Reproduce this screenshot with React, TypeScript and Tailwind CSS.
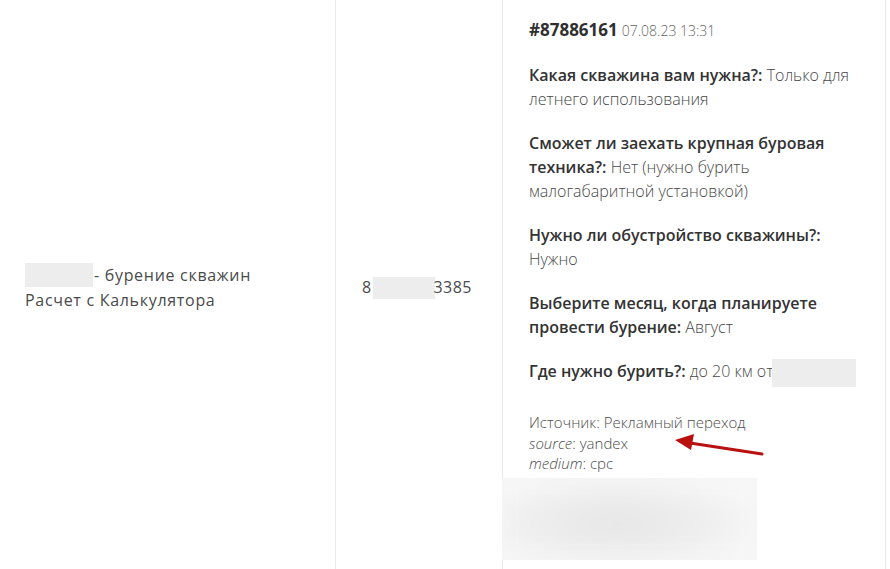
import React from "react";

const FONT = { fontFamily: '"Open Sans", "Noto Sans", sans-serif' };

const L = ({ children }: { children: React.ReactNode }) => (
  <b className="font-semibold text-[#333]">{children}</b>
);

const ANSWERS: React.ReactNode[][] = [
  [<><L>Какая скважина вам нужна?:</L> Только для</>, <>летнего использования</>],
  [
    <L>Сможет ли заехать крупная буровая</L>,
    <><L>техника?:</L> Нет (нужно бурить</>,
    <>малогабаритной установкой)</>,
  ],
  [<L>Нужно ли обустройство скважины?:</L>, <>Нужно</>],
  [<L>Выберите месяц, когда планируете</L>, <><L>провести бурение:</L> Август</>],
  [
    <>
      <L>Где нужно бурить?:</L> до 20 км от
      <span className="inline-block w-[84px] h-[28px] align-middle -ml-[1px] bg-[#ededed]" />
    </>,
  ],
];

export default function App() {
  return (
    <div className="relative w-[890px] h-[569px] overflow-hidden bg-white" style={FONT}>
      <div className="flex h-full">
        {/* name column */}
        <div className="w-[336px] shrink-0 border-r border-[#ebebeb] flex items-center pl-[25px] pt-[6px]">
          <div className="text-[16px] leading-[25px] text-[#4a4a4a] tracking-[0.7px]">
            <div className="flex items-center">
              <span className="inline-block w-[68px] h-[24px] bg-[#ededed]" />
              <span className="ml-[1px]">- бурение скважин</span>
            </div>
            <div>Расчет с Калькулятора</div>
          </div>
        </div>

        {/* phone column */}
        <div className="w-[167px] shrink-0 border-r border-[#ebebeb] flex items-center pl-[26px] pt-[6px]">
          <div className="flex items-center text-[16px] leading-[25px] text-[#4a4a4a] tracking-[0.4px]">
            <span>8</span>
            <span className="inline-block w-[62px] h-[22px] bg-[#ededed] ml-[1px]" />
            <span className="-ml-[1px]">3385</span>
          </div>
        </div>

        {/* details column */}
        <div className="relative w-[383px] shrink-0 border-r border-[#ebebeb] pl-[26px] pt-[18px]">
          <div className="flex items-baseline gap-[4px] leading-[24px]">
            <span className="text-[17px] font-bold text-[#2f2f2f]">#87886161</span>
            <span className="text-[14px] font-light text-[#666]">07.08.23 13:31</span>
          </div>

          <div className="mt-[20px] flex flex-col gap-[20px]">
            {ANSWERS.map((lines, i) => (
              <div key={i} className="text-[16px] leading-[24px] text-[#484848] font-light">
                {lines.map((l, j) => (
                  <div key={j} className="whitespace-nowrap">
                    {l}
                  </div>
                ))}
              </div>
            ))}
          </div>

          <div className="mt-[25px] text-[15px] leading-[20.5px] text-[#4d4d4d] font-light">
            <div>Источник: Рекламный переход</div>
            <div>
              <i>source</i>: yandex
            </div>
            <div>
              <i>medium</i>: cpc
            </div>
          </div>

          {/* blurred redacted area */}
          <div className="-ml-[27px] mt-[4px] w-[255px] h-[82px] overflow-hidden bg-[#f6f6f6]">
            <div className="w-full h-full blur-[10px] bg-[radial-gradient(ellipse_at_45%_55%,#e6e6e6_0%,#eeeeee_45%,#f8f8f8_80%)]" />
          </div>
        </div>
      </div>

      {/* red arrow */}
      <svg className="absolute left-0 top-0" width="890" height="569" viewBox="0 0 890 569">
        <line x1="762" y1="454" x2="690" y2="443" stroke="#b8110f" strokeWidth="3" strokeLinecap="round" />
        <polygon points="675,440 694,434 691,450" fill="#b8110f" />
      </svg>
    </div>
  );
}
